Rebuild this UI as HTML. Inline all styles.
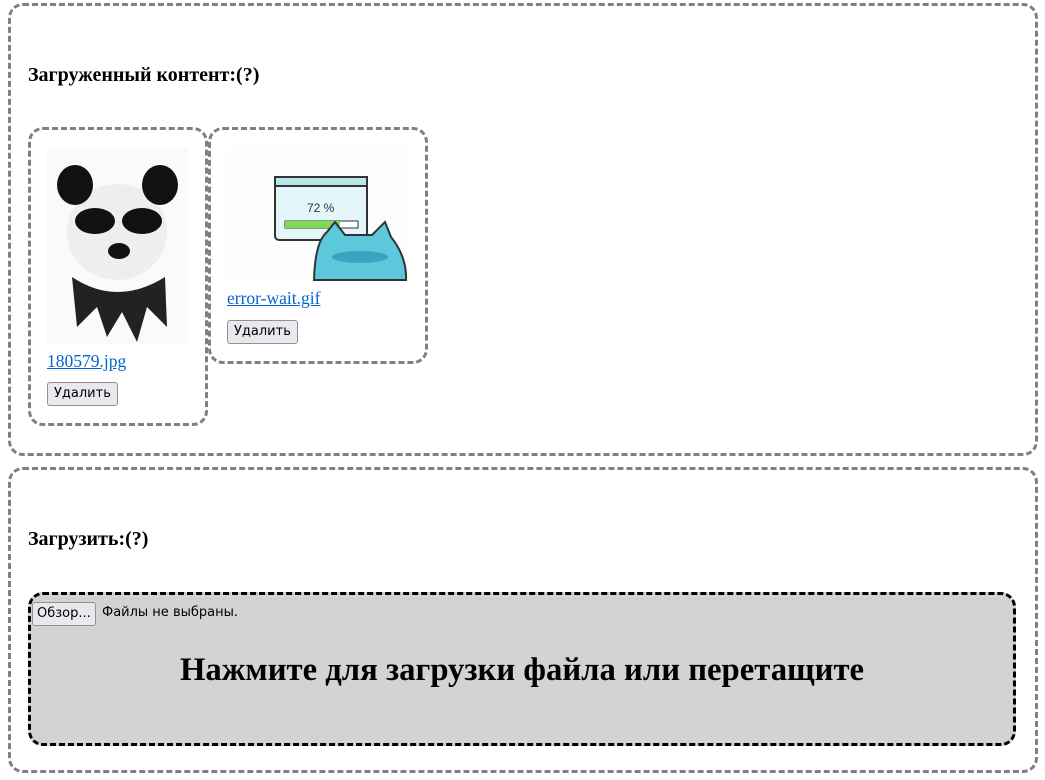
<!DOCTYPE html>
<html><head><meta charset="utf-8"><style>
body{margin:0;width:1045px;height:780px;background:#fff;font-family:"Liberation Serif",serif;position:relative;overflow:hidden}
.box{position:absolute;border:3px dashed #808080;border-radius:15px;box-sizing:border-box}
.h{position:absolute;font-weight:bold;font-size:20px;color:#000}
.card{position:absolute;border:3px dashed #808080;border-radius:15px;box-sizing:border-box}
a{color:#0066cc;text-decoration:underline;font-size:17.5px;position:absolute}
.btn{position:absolute;font-family:"DejaVu Sans","Liberation Sans",sans-serif;font-size:13px;background:#e9e9ed;border:1px solid #8f8f9d;border-radius:3px;padding:2px 6px;box-sizing:border-box;height:24px;line-height:18px;color:#000}
.drop{position:absolute;left:28px;top:592px;width:988px;height:154px;background:#d3d3d3;border:3px dashed #000;border-radius:15px;box-sizing:border-box}
</style></head><body>
<div class="box" style="left:8px;top:3px;width:1030px;height:453px"></div>
<div class="h" style="left:28px;top:64px">Загруженный контент:(?)</div>
<div class="card" style="left:28px;top:127px;width:180px;height:299px"></div>
<div class="card" style="left:208px;top:127px;width:220px;height:237px"></div>
<svg style="position:absolute;left:47px;top:147px" width="141" height="198" viewBox="0 0 141 198">
<rect width="141" height="198" fill="#fafafa"/>
<ellipse cx="70" cy="85" rx="50" ry="48" fill="#eee"/>
<ellipse cx="28" cy="38" rx="18" ry="20" fill="#111"/>
<ellipse cx="113" cy="38" rx="18" ry="20" fill="#111"/>
<ellipse cx="48" cy="74" rx="20" ry="13" fill="#111"/>
<ellipse cx="95" cy="74" rx="20" ry="13" fill="#111"/>
<ellipse cx="72" cy="104" rx="11" ry="8" fill="#111"/>
<path d="M25 130 Q70 160 118 130 L120 180 L100 160 L90 195 L75 165 L60 190 L50 160 L30 180 Z" fill="#222"/>
</svg>
<svg style="position:absolute;left:227px;top:147px" width="181" height="135" viewBox="0 0 181 135">
<rect width="181" height="135" fill="#fcfdfd"/>
<rect x="48" y="30" width="92" height="63" rx="4" fill="#e3f6fa" stroke="#333" stroke-width="2"/>
<rect x="48" y="30" width="92" height="9" fill="#b8e6ea" stroke="#333" stroke-width="2"/>
<text x="80" y="65" font-size="12" fill="#333" font-family="Liberation Sans">72 %</text>
<rect x="58" y="74" width="73" height="7" fill="#fff" stroke="#333"/>
<rect x="58" y="74" width="55" height="7" fill="#7ed957"/>
<path d="M87 133 Q88 95 100 85 L108 75 L118 88 L145 88 L158 75 L164 90 Q180 110 179 133 Z" fill="#5bc8dc" stroke="#333" stroke-width="2"/>
<ellipse cx="133" cy="110" rx="28" ry="6" fill="#3aa3c0"/>
</svg>
<a style="left:47px;top:351px">180579.jpg</a>
<a style="left:227px;top:288px">error-wait.gif</a>
<div class="btn" style="left:47px;top:382px">Удалить</div>
<div class="btn" style="left:227px;top:320px">Удалить</div>

<div class="box" style="left:8px;top:467px;width:1030px;height:306px"></div>
<div class="h" style="left:28px;top:528px">Загрузить:(?)</div>
<div class="drop"></div>
<div class="btn" style="left:32px;top:602px;padding:2px 4px">Обзор...</div>
<div style="position:absolute;left:102px;top:605px;font-family:'DejaVu Sans','Liberation Sans',sans-serif;font-size:13px">Файлы не выбраны.</div>
<div style="position:absolute;left:28px;width:988px;top:652px;text-align:center;font-weight:bold;font-size:32.7px">Нажмите для загрузки файла или перетащите</div>
</body></html>
